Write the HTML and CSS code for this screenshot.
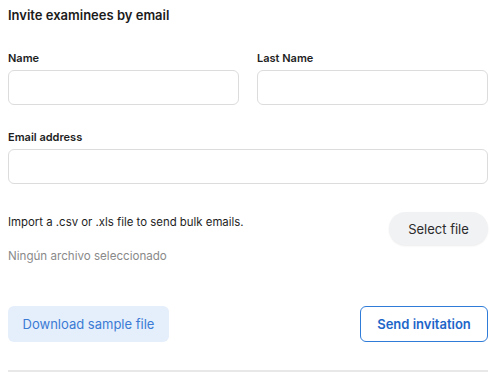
FILE: index.html
```html
<!DOCTYPE html>
<html lang="en">
<head>
<meta charset="utf-8">
<link rel="stylesheet" href="styles.css">
</head>
<body>
<div class="panel">
  <h2 class="title">Invite examinees by email</h2>
  <div class="row-two">
    <div class="field">
      <label class="label">Name</label>
      <input class="input" type="text">
    </div>
    <div class="field">
      <label class="label">Last Name</label>
      <input class="input" type="text">
    </div>
  </div>
  <div class="field email-field">
    <label class="label">Email address</label>
    <input class="input" type="text">
  </div>
  <div class="import-row">
    <p class="import-text">Import a .csv or .xls file to send bulk emails.</p>
    <button class="select-btn">Select file</button>
  </div>
  <p class="no-file">Ningún archivo seleccionado</p>
  <div class="actions">
    <button class="download-btn">Download sample file</button>
    <button class="send-btn">Send invitation</button>
  </div>
  <hr class="divider">
</div>
</body>
</html>
```
FILE: styles.css
```css
* { box-sizing: border-box; }
html, body { margin: 0; padding: 0; background: #fff; }
body { font-family: Inter, "Noto Sans", sans-serif; color: #1b1b1b; }
.panel { padding: 6px 12px 0 8px; }
.title { margin: 0; font-size: 13px; line-height: 18px; font-weight: 600; letter-spacing: 0; }
.row-two { display: grid; grid-template-columns: minmax(0, 1fr) minmax(0, 1fr); column-gap: 18px; margin-top: 27px; }
.field { display: flex; flex-direction: column; min-width: 0; }
.label { font-size: 11px; line-height: 14px; font-weight: 600; margin-bottom: 5px; color: #1e1e1e; }
.input { width: 100%; min-width: 0; height: 35px; border: 1px solid #dcdcdc; border-radius: 6px; background: #fff; outline: none; font: inherit; padding: 0 10px; }
.email-field { margin-top: 25px; }
.import-row { display: flex; justify-content: space-between; align-items: flex-start; margin-top: 28px; }
.import-text { margin: 2px 0 0; font-size: 11.4px; line-height: 16px; color: #1e1e1e; letter-spacing: 0; }
.select-btn { height: 33px; width: 99px; border: none; border-radius: 17px; background: #f1f2f4; box-shadow: 0 1px 2px rgba(0,0,0,0.08); font-family: inherit; font-size: 13px; color: #2b2b2b; cursor: pointer; }
.no-file { margin: 3px 0 0; font-size: 11.6px; line-height: 16px; color: #8a8a8a; }
.actions { display: flex; justify-content: space-between; margin-top: 42px; }
.download-btn { height: 36px; width: 161px; border: none; border-radius: 6px; background: #e5eefb; color: #3a7bd5; font-family: inherit; font-size: 13px; cursor: pointer; }
.send-btn { height: 36px; width: 128px; border: 1px solid #2f7bd8; border-radius: 6px; background: #fff; color: #1d66c9; font-family: inherit; font-size: 13px; font-weight: 600; cursor: pointer; }
.divider { margin: 28px 0 0; border: none; height: 2px; background: #e8e8e8; }
```
